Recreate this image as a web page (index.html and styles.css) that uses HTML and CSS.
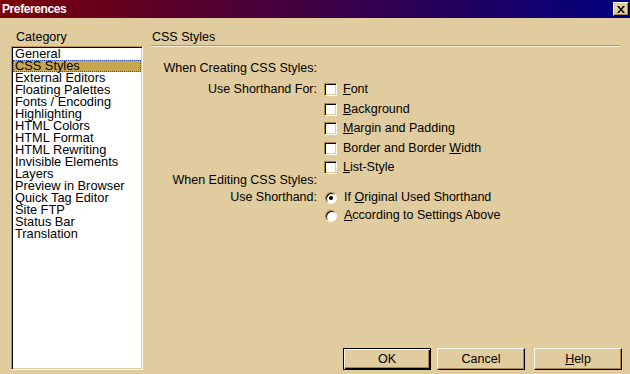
FILE: index.html
```html
<!DOCTYPE html>
<html lang="en">
<head>
    <meta charset="UTF-8">
    <title>Preferences</title>
    <link rel="stylesheet" href="styles.css">
</head>
<body>

<div class="window">
    <div class="titlebar">
        <span class="title">Preferences</span>
        <button type="button" class="closeBtn">
            <svg width="8" height="7" viewBox="0 0 8 7"><path d="M0 0h2l2 2.5L6 0h2L5 3.5 8 7H6L4 4.5 2 7H0l3-3.5z" fill="#000"/></svg>
        </button>
    </div>

    <div class="body">
        <div class="category">
            <div class="heading">Category</div>
            <ul class="list">
                <li>General</li>
                <li class="selected">CSS Styles</li>
                <li>External Editors</li>
                <li>Floating Palettes</li>
                <li>Fonts / Encoding</li>
                <li>Highlighting</li>
                <li>HTML Colors</li>
                <li>HTML Format</li>
                <li>HTML Rewriting</li>
                <li>Invisible Elements</li>
                <li>Layers</li>
                <li>Preview in Browser</li>
                <li>Quick Tag Editor</li>
                <li>Site FTP</li>
                <li>Status Bar</li>
                <li>Translation</li>
            </ul>
        </div>

        <div class="panel">
            <div class="heading">CSS Styles</div>
            <div class="rule"></div>

            <div class="options">
                <div class="label">When Creating CSS Styles:</div>
                <div class="label">Use Shorthand For:</div>
                <div class="control"><span class="check"></span><span><u>F</u>ont</span></div>
                <div class="control"><span class="check"></span><span><u>B</u>ackground</span></div>
                <div class="control"><span class="check"></span><span><u>M</u>argin and Padding</span></div>
                <div class="control"><span class="check"></span><span>Border and Border <u>W</u>idth</span></div>
                <div class="control"><span class="check"></span><span><u>L</u>ist-Style</span></div>
                <div class="label">When Editing CSS Styles:</div>
                <div class="label">Use Shorthand:</div>
                <div class="control"><span class="radio on"></span><span>If <u>O</u>riginal Used Shorthand</span></div>
                <div class="control"><span class="radio"></span><span><u>A</u>ccording to Settings Above</span></div>
            </div>

            <div class="buttons">
                <button type="button" class="btn default">OK</button>
                <button type="button" class="btn">Cancel</button>
                <button type="button" class="btn help"><u>H</u>elp</button>
            </div>
        </div>
    </div>
</div>

</body>
</html>
```

FILE: styles.css
```css
body {
    margin: 0;
    font-family: "Liberation Sans", Arial, sans-serif;
    font-size: 12.5px;
    color: #000;
}
.window {
    width: 630px;
    height: 374px;
    background: #e0cc9e;
    display: flex;
    flex-direction: column;
}
.titlebar {
    height: 18px;
    background: linear-gradient(to right, #7c0008, #000080);
    display: flex;
    align-items: center;
    justify-content: space-between;
}
.title {
    color: #fff;
    font-weight: bold;
    font-size: 12px;
    letter-spacing: -0.4px;
    padding-left: 2px;
}
.closeBtn {
    width: 16px;
    height: 14px;
    margin-right: 1px;
    padding: 0;
    background: #e0cc9e;
    border: 1px solid;
    border-color: #fff8e8 #000 #000 #fff8e8;
    box-shadow: inset -1px -1px 0 #a8883c;
    display: flex;
    align-items: center;
    justify-content: center;
}
.body {
    flex: 1;
    display: flex;
    gap: 8px;
    padding: 12px 8px 4px 11px;
}
.heading {
    line-height: 14px;
    height: 14px;
}
.category {
    width: 132px;
    display: flex;
    flex-direction: column;
}
.category .heading {
    padding-left: 5px;
    margin-bottom: 2px;
}
.list {
    flex: 1;
    margin: 0;
    list-style: none;
    background: #fff;
    border: 1px solid;
    border-color: #c09838 #fff8e8 #fff8e8 #c09838;
    box-shadow: inset 1px 1px 0 #000, inset -1px -1px 0 #e0cc9e;
    padding: 1px;
    font-size: 12.8px;
}
.list li {
    line-height: 12px;
    height: 12px;
    padding-left: 2px;
}
.list li.selected {
    background: #c8a84e;
    outline: 1px dotted #3050c0;
    outline-offset: -1px;
}
.panel {
    flex: 1;
    display: flex;
    flex-direction: column;
}
.panel .heading {
    padding-left: 1px;
}
.rule {
    height: 1px;
    margin: 1px 2px 0 0;
    background: #c09838;
    border-bottom: 1px solid #fff4d8;
}
.options {
    margin-top: 14px;
    display: grid;
    grid-template-columns: 166px 1fr;
    grid-template-rows: 21px 20px 19px 20px 19px 13px 17px 18px 18px;
    column-gap: 7px;
    line-height: 14px;
}
.label {
    grid-column: 1;
    text-align: right;
}
.control {
    grid-column: 2;
    display: flex;
    align-items: flex-start;
    gap: 6px;
}
.check {
    width: 11px;
    height: 11px;
    margin-top: 1px;
    background: #fff;
    border: 1px solid;
    border-color: #a8883c #fff8e8 #fff8e8 #a8883c;
    box-shadow: inset 1px 1px 0 #000, inset -1px -1px 0 #e0cc9e;
}
.radio {
    width: 12px;
    height: 12px;
    margin: 2px 1px 0 1px;
    box-sizing: border-box;
    border-radius: 50%;
    background: #fff;
    border: 1px solid;
    border-color: #a8883c #fff8e8 #fff8e8 #a8883c;
    box-shadow: inset 1px 1px 0 #000;
    position: relative;
}
.radio.on::after {
    content: "";
    position: absolute;
    left: 3px;
    top: 3px;
    width: 4px;
    height: 4px;
    border-radius: 50%;
    background: #000;
}
.buttons {
    margin-top: auto;
    display: flex;
    justify-content: flex-end;
    gap: 6px;
}
.btn {
    width: 88px;
    height: 22px;
    padding: 0;
    font-family: inherit;
    font-size: 12.5px;
    color: #000;
    background: #e0cc9e;
    border: 1px solid;
    border-color: #fff8e8 #000 #000 #fff8e8;
    box-shadow: inset -1px -1px 0 #a8883c;
}
.btn.default {
    border: 1px solid #000;
    box-shadow: inset 1px 1px 0 #fff8e8, inset -1px -1px 0 #000, inset -2px -2px 0 #a8883c;
}
.btn.help {
    margin-left: 3px;
}
```
